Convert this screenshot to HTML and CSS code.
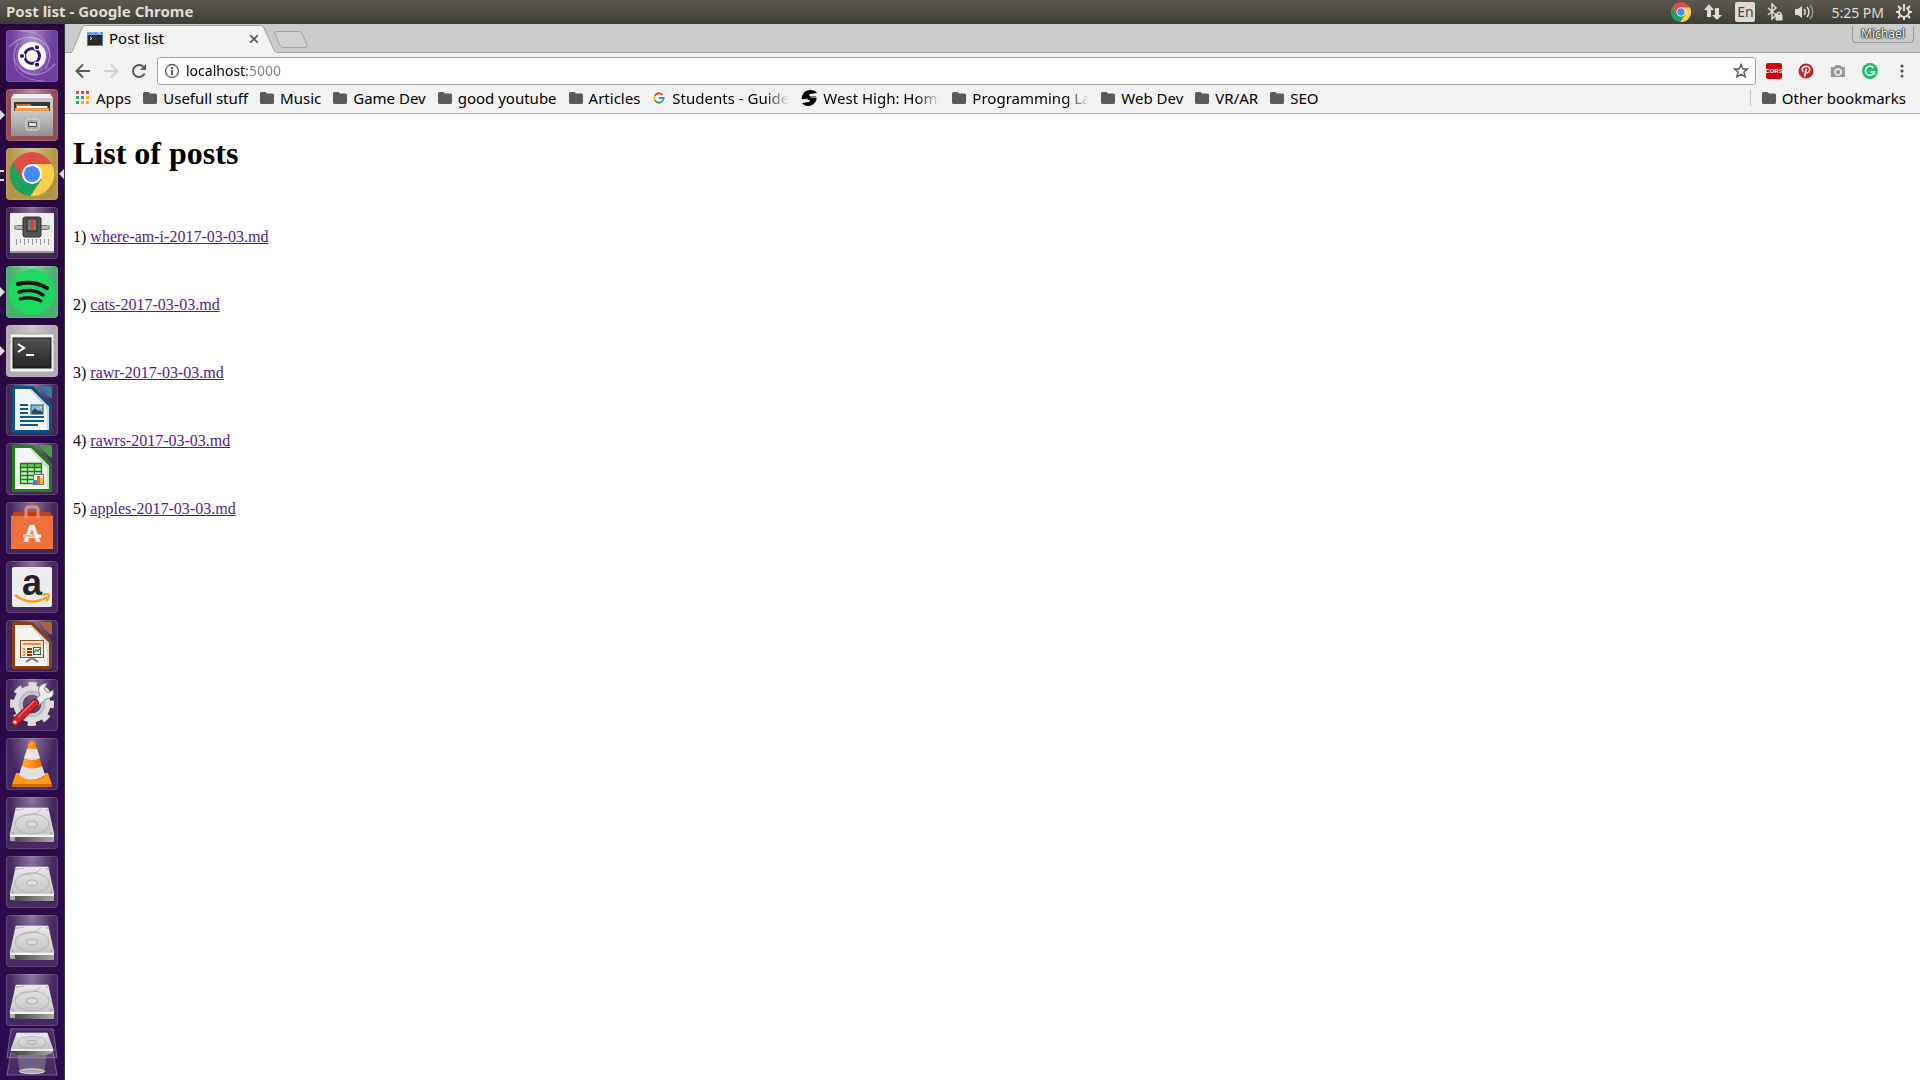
FILE: index.html
```html
<!DOCTYPE html>
<html lang="en">
<head>
  <meta charset="UTF-8" />
  <meta name="viewport" content="width=device-width, initial-scale=1.0" />
  <title>Post list</title>
  <link rel="stylesheet" href="styles.css">
</head>
<body>
  <svg class="defs" aria-hidden="true">
    <defs>
      <linearGradient id="metal" x1="0" y1="0" x2="0" y2="1"><stop offset="0" stop-color="#e9e9e9"/><stop offset="1" stop-color="#c4c4c4"/></linearGradient>
      <linearGradient id="edge" x1="0" y1="0" x2="1" y2="0"><stop offset="0" stop-color="#3c3c3c"/><stop offset="1" stop-color="#a8a8a8"/></linearGradient>
      <linearGradient id="drawer" x1="0" y1="0" x2="0" y2="1"><stop offset="0" stop-color="#c9c9c9"/><stop offset="1" stop-color="#929292"/></linearGradient>
      <linearGradient id="screen" x1="0" y1="0" x2="0" y2="1"><stop offset="0" stop-color="#555"/><stop offset="1" stop-color="#222"/></linearGradient>
      <linearGradient id="orange" x1="0" y1="0" x2="0" y2="1"><stop offset="0" stop-color="#e8703f"/><stop offset="1" stop-color="#f4743a"/></linearGradient>
      <linearGradient id="cone" x1="0" y1="0" x2="1" y2="0"><stop offset="0" stop-color="#ffa53a"/><stop offset=".5" stop-color="#ff9320"/><stop offset="1" stop-color="#d95b00"/></linearGradient>
    </defs>
    <symbol id="chrome" viewBox="0 0 44 44">
      <circle cx="22" cy="22" r="22" fill="#dd4f43"/>
      <path d="M22 22 12.500 27.500 3 11A22 22 0 0 0 20.500 44L31.500 27.500z" fill="#1ba261"/>
      <path d="M22 12H41.600A22 22 0 0 1 20.500 44L31.500 27.500z" fill="#ffcf4b"/>
      <circle cx="22" cy="22" r="10" fill="#fff"/>
      <circle cx="22" cy="22" r="8" fill="#4a8af4"/>
    </symbol>
    <symbol id="folder" viewBox="0 0 14 12">
      <path d="M1.500 0H5.500L7 1.500H12.500Q14 1.500 14 3V10.500Q14 12 12.500 12H1.500Q0 12 0 10.500V1.500Q0 0 1.500 0z" fill="#5a5a5a"/>
    </symbol>
    <symbol id="disk" viewBox="0 0 52 52">
      <path d="M10 11H42L48 38H4z" fill="url(#metal)" stroke="#efefef" stroke-width=".6"/>
      <path d="M4 39H48V44Q48 45 47 45H5Q4 45 4 44z" fill="url(#edge)"/>
      <path d="M4 38H48V40H4z" fill="#f5f5f5"/>
      <path d="M4 40H9V44H5Q4 44 4 43z" fill="#aaa"/>
      <ellipse cx="26" cy="27" rx="17" ry="10" fill="none" stroke="#b5b5b5"/>
      <path d="M10 24Q14 18 25 18 32 17 35 12M12 13 18 12" fill="none" stroke="#bbb"/>
      <ellipse cx="26" cy="27" rx="5.500" ry="3" fill="#ddd" stroke="#aaa"/>
      <g fill="#777"><circle cx="7" cy="36" r=".7"/><circle cx="45" cy="36" r=".7"/><circle cx="11" cy="13" r=".7"/><circle cx="41" cy="13" r=".7"/></g>
    </symbol>
    <symbol id="office" viewBox="0 0 52 52">
      <path d="M8 2H27L46 21V47Q46 49 44 49H8Q6 49 6 47V4Q6 2 8 2z" fill="currentColor"/>
      <path d="M9 5H25L43 23V46H9z" fill="#f4f4f4"/>
      <path d="M25 5 43 23V46H41V25L23 5z" fill="#d5d5d5"/>
      <path d="M33 2H44Q46 2 46 4V15Q39 11 33 2z" fill="currentColor"/>
      <path d="M33 2H44Q46 2 46 4V15Q39 11 33 2z" fill="#fff" opacity=".2"/>
    </symbol>
  </svg>

  <header class="panel">
    <span class="window-title">Post list - Google Chrome</span>
    <div class="indicators">
      <svg width="20" height="20"><use href="#chrome"/></svg>
      <svg width="20" height="20" viewBox="0 0 20 20" fill="#dfdbd2"><path d="M6 2 11 8H8V15H4V8H1zM14 18 9 13H12V6H16V13H19z"/></svg>
      <span class="lang">En</span>
      <svg width="16" height="20" viewBox="0 0 16 20" fill="none" stroke="#dfdbd2" stroke-width="1.500"><path d="M1 6 9 13 5 17V2L9 6 1 13"/><path d="M9 13H15V18H9z" fill="#dfdbd2" stroke="#dfdbd2" stroke-width="1"/><path d="M10 13V11.500Q12 9 14 11.500V13"/></svg>
      <svg width="24" height="20" viewBox="0 0 24 20" fill="none" stroke="#dfdbd2" stroke-width="1.500"><path d="M0 7H3L7 4V16L3 13H0z" fill="#dfdbd2" stroke="none"/><path d="M9 7Q11.500 10 9 13M12 5Q16 10 12 15"/><path d="M15 3Q20.500 10 15 17" stroke="#99968e"/></svg>
      <span class="clock">5:25 PM</span>
      <svg width="16" height="20" viewBox="0 0 16 20" fill="none" stroke="#dfdbd2"><path d="M5.500 5.600A5 5 0 1 0 10.500 5.600" stroke-width="2"/><path d="M8 2V9" stroke-width="2"/><path d="M4 6 2 4M12 6 14 4M3 10H0M13 10H16M4 14 2 16M12 14 14 16M8 15V18" stroke-width="2"/></svg>
    </div>
  </header>

  <div class="desktop">
    <nav class="launcher" aria-label="Launcher">
      <button class="tile dash" aria-label="Search">
        <svg viewBox="0 0 52 52"><g fill="none" stroke="#fff" stroke-opacity=".3"><path d="M3 17Q18 1 36 11 50 22 39 39" stroke-width="1.500"/><path d="M49 34Q34 51 17 41 2 30 12 13" stroke-width="1.500"/><path d="M14 1Q42 0 44 27M38 51Q8 50 8 28"/></g><path d="M13 13Q28 0 39 14 46 25 38 37L26 26z" fill="#fff" opacity=".15"/><path d="M39 39Q24 52 13 38 6 27 14 15L26 26z" fill="#fff" opacity=".15"/><circle cx="26" cy="26" r="14" fill="#fff"/><circle cx="26" cy="26" r="7.500" fill="none" stroke="#3d1768" stroke-width="3"/><g fill="#3d1768" stroke="#fff" stroke-width="1.200"><circle cx="16" cy="26" r="2.700"/><circle cx="31" cy="17.300" r="2.700"/><circle cx="31" cy="34.700" r="2.700"/></g></svg>
      </button>
      <button class="tile files running" aria-label="Files">
        <svg viewBox="0 0 52 52"><path d="M8 5H44L47 9V46H5V9z" fill="#c8c8c8"/><path d="M8 5H44L47 9H5z" fill="#f1f1f1"/><path d="M8 13H44V24H8z" fill="#373737"/><path d="M10 15H24L26 17H42V24H10z" fill="#dc682a"/><path d="M11 17H41V24H11z" fill="#fff"/><path d="M9 19H43V24H9z" fill="#f19b4d"/><path d="M5 22H47V47H5z" fill="url(#drawer)"/><rect x="20" y="30" width="13" height="11" rx="2" fill="#aaa" stroke="#e0e0e0"/><path d="M22.500 33.500H30.500V37.500H22.500z" fill="#ddd" stroke="#555"/></svg>
      </button>
      <button class="tile browser" aria-label="Google Chrome">
        <svg viewBox="0 0 52 52"><use href="#chrome" x="4" y="4" width="44" height="44"/></svg>
      </button>
      <button class="tile" aria-label="Tweak Tool">
        <svg viewBox="0 0 52 52"><rect x="4" y="6" width="44" height="40" rx="1" fill="#eee"/><path d="M4 44H48V46H4z" fill="#999"/><rect x="8.500" y="18.500" width="35" height="4" rx="2" fill="#bbb" stroke="#777"/><rect x="17" y="10" width="18" height="20" rx="2" fill="#555" stroke="#333"/><rect x="21" y="12" width="10" height="12" fill="#777" stroke="#292929"/><path d="M26 12V23" stroke="#f22" stroke-width="2"/><path d="M10.500 32V38M14.500 32V36M18.500 32V38M22.500 32V36M26.500 32V38M30.500 32V36M34.500 32V38M38.500 32V36M42.500 32V38" stroke="#999"/></svg>
      </button>
      <button class="tile spotify running" aria-label="Spotify">
        <svg viewBox="0 0 52 52"><circle cx="26" cy="26" r="23" fill="#1ed760"/><g fill="none" stroke="#191414" stroke-linecap="round"><path d="M12 18Q28 14 41 22" stroke-width="4"/><path d="M13 26Q27 22 37 29" stroke-width="3.500"/><path d="M14 33Q26 30 35 35" stroke-width="3"/></g></svg>
      </button>
      <button class="tile terminal running" aria-label="Terminal">
        <svg viewBox="0 0 52 52"><rect x="4" y="9" width="44" height="38" rx="1" fill="#f2f2f2" stroke="#aaa"/><rect x="7" y="13" width="38" height="30" fill="url(#screen)" stroke="#161616"/><path d="M12 19 18 23 12 27M20 30H28" fill="none" stroke="#fff" stroke-width="2"/></svg>
      </button>
      <button class="tile writer" aria-label="LibreOffice Writer">
        <svg viewBox="0 0 52 52"><use href="#office"/><path d="M14 21H22M14 25H22M14 29H22M14 33H38M14 37H38M14 41H32" stroke="#125a8c" stroke-width="2"/><rect x="25" y="21" width="12" height="9" fill="#79c0e8" stroke="#125a8c"/><path d="M26 30V27L29 24 32 27 34 26 37 29V30z" fill="#3c4a4a"/><circle cx="35" cy="23" r="1.500" fill="#f8c53a"/></svg>
      </button>
      <button class="tile calc" aria-label="LibreOffice Calc">
        <svg viewBox="0 0 52 52"><use href="#office"/><path d="M14 20H36V41H14z" fill="#c8f1bd"/><path d="M14 20H36V24H14z" fill="#73cc5e"/><path d="M14.500 20.500H35.500V40.500H14.500zM21.500 20V41M28.500 20V41M14 24.500H36M14 28.500H36M14 32.500H36M14 36.500H36" fill="none" stroke="#18790e" stroke-width="1.300"/><rect x="27.500" y="31.500" width="10" height="10" fill="#fff" stroke="#777"/><path d="M28 37H31V41H28z" fill="#298ac4"/><path d="M31 33H34V41H31z" fill="#e76b28"/><path d="M34 35H37V41H34z" fill="#f5b52d"/></svg>
      </button>
      <button class="tile" aria-label="Ubuntu Software">
        <svg viewBox="0 0 52 52"><path d="M8 10H44L47 15H5z" fill="#b9421b"/><path d="M5 14H47V47H5z" fill="url(#orange)"/><path d="M20 17V8Q20 5 23 5H29Q32 5 32 8V17" fill="none" stroke="#f08a66" stroke-width="3"/><text x="26" y="40" class="store-letter">A</text><path d="M17 34H35" stroke="#fff" stroke-width="3"/><path d="M18 34H29" stroke="#ee6b30"/></svg>
      </button>
      <button class="tile" aria-label="Amazon">
        <svg viewBox="0 0 52 52"><rect x="6" y="6" width="40" height="40" rx="2" fill="#ececec"/><text x="26" y="34" class="amazon-letter">a</text><path d="M9 34Q25 46 41 36" fill="none" stroke="#ff9a13" stroke-width="2.500"/><path d="M37 34Q41 32 43 34 43 38 40 40" fill="none" stroke="#ff9a13" stroke-width="2"/></svg>
      </button>
      <button class="tile impress" aria-label="LibreOffice Impress">
        <svg viewBox="0 0 52 52"><use href="#office"/><rect x="14.500" y="20.500" width="23" height="17" fill="#fbe8dc" stroke="#a34d16"/><path d="M17 24H35" stroke="#e7894e" stroke-width="2"/><path d="M17 29H19M17 32H19M17 35H19" stroke="#e7894e" stroke-width="2"/><path d="M21 29H26M21 32H26M21 35H26" stroke="#8c3b0d" stroke-width="2"/><rect x="27.500" y="27.500" width="7" height="7" fill="#fff" stroke="#555"/><path d="M28 33 30 30 32 31 35 28" fill="none" stroke="#2ca02c" stroke-width="1.500"/><path d="M20 42 26 38 32 42" fill="none" stroke="#777" stroke-width="2"/></svg>
      </button>
      <button class="tile" aria-label="System Settings">
        <svg viewBox="0 0 52 52"><circle cx="26" cy="25" r="19" fill="none" stroke="#ddd" stroke-width="6" stroke-dasharray="8 6.920" stroke-dashoffset="4"/><circle cx="26" cy="25" r="14" fill="none" stroke="#ddd" stroke-width="9"/><circle cx="26" cy="25" r="12" fill="none" stroke="#bdbdbd" stroke-width="3"/><path d="M28 23 34 16Q30 8 37 5L41 4 38 10 42 14 47 11Q49 19 40 20L32 27z" fill="#f0f0f0" stroke="#888"/><path d="M9 43 29 24" stroke="#8f1015" stroke-width="8" stroke-linecap="round"/><path d="M9 43 29 24" stroke="#d4252c" stroke-width="6" stroke-linecap="round"/><path d="M12 38 28 22" stroke="#ef7175" stroke-width="1.500"/><circle cx="9" cy="43" r="1.500" fill="#fff"/></svg>
      </button>
      <button class="tile" aria-label="VLC media player">
        <svg viewBox="0 0 52 52"><path d="M10 35H42L46 47H6z" fill="#ff9b1a"/><path d="M6 46H46V49H6z" fill="#d36a00"/><path d="M23 4Q26 2 29 4L39 38Q26 47 13 38z" fill="url(#cone)"/><path d="M21 11H31L34 20Q26 24 18 20z" fill="#e6e6e6"/><path d="M16 28Q26 33 36 28L39 37Q26 46 13 37z" fill="#e1e1e1"/></svg>
      </button>
      <button class="tile" aria-label="Disk 1"><svg viewBox="0 0 52 52"><use href="#disk"/></svg></button>
      <button class="tile" aria-label="Disk 2"><svg viewBox="0 0 52 52"><use href="#disk"/></svg></button>
      <button class="tile" aria-label="Disk 3"><svg viewBox="0 0 52 52"><use href="#disk"/></svg></button>
      <button class="tile" aria-label="Disk 4"><svg viewBox="0 0 52 52"><use href="#disk"/></svg></button>
      <button class="folded" aria-label="Disk 5 and Trash">
        <svg width="52" height="50" viewBox="0 0 54 50"><g fill="#fff" fill-opacity=".14" stroke="#fff" stroke-opacity=".3"><path d="M5 1H49L53 31H1z"/><path d="M5 26H49L53 49H1z"/></g><path d="M12 26H42L40 46H14z" fill="#aaa" fill-opacity=".4"/><ellipse cx="27" cy="45" rx="13" ry="2.500" fill="#aaa" stroke="#ddd"/><path d="M11 5H43L49 22H5z" fill="url(#metal)"/><path d="M5 22H49V25L42 28H12L5 25z" fill="url(#edge)"/><path d="M5 22H49V24H5z" fill="#eee"/><ellipse cx="27" cy="15" rx="15" ry="6" fill="none" stroke="#b5b5b5"/><ellipse cx="27" cy="15" rx="5" ry="2" fill="none" stroke="#aaa"/></svg>
      </button>
    </nav>

    <div class="browser-window">
      <div class="tab-strip">
        <div class="tab">
          <svg class="tab-shape" width="208" height="29" viewBox="0 0 208 29"><path d="M0 28.500H1Q2 28 3 26L12 4Q13 1.500 15 1.500H191Q193 1.500 194 4L204 26Q205 28.500 208 28.500V29H0z" fill="#f2f2f2"/><path d="M0 28.500H1Q2 28 3 26L12 4Q13 1.500 15 1.500H191Q193 1.500 194 4L204 26Q205 28.500 208 28.500" fill="none" stroke="#a0a0a0"/></svg>
          <svg class="favicon" width="16" height="14" viewBox="0 0 16 14"><path d="M0 0H16V14H0z" fill="#5f7da8"/><path d="M0 0H16V3H0z" fill="#6ea0e4"/><path d="M1 3H15V13H1z" fill="#292929"/><path d="M3 5 5 6.500 3 8" fill="none" stroke="#fff"/><path d="M11 1H13" stroke="#fff"/><path d="M14 1H15" stroke="#e33"/></svg>
          <span class="tab-title">Post list</span>
          <button class="tab-close" aria-label="Close tab"><svg width="8" height="8" viewBox="0 0 8 8"><path d="M0 0 8 8M8 0 0 8" stroke="#555" stroke-width="1.600"/></svg></button>
        </div>
        <button class="new-tab" aria-label="New tab"><svg width="34" height="18" viewBox="0 0 34 18"><path d="M2 .500H25Q27 .500 28 2.500L33 14Q34 16.500 31 16.500H9Q7 16.500 6 14.500L1 3Q0 .500 2 .500z" fill="#d2d2d2" stroke="#a5a5a5"/></svg></button>
        <button class="profile">Michael</button>
      </div>

      <div class="toolbar">
        <button class="tool" aria-label="Back"><svg width="16" height="16" viewBox="0 0 16 16"><path d="M15 8H2M8 1.500 1.500 8 8 14.500" fill="none" stroke="#5a5a5a" stroke-width="2"/></svg></button>
        <button class="tool" aria-label="Forward" disabled><svg width="16" height="16" viewBox="0 0 16 16"><path d="M1 8H14M8 1.500 14.500 8 8 14.500" fill="none" stroke="#d3d3d3" stroke-width="2"/></svg></button>
        <button class="tool" aria-label="Reload"><svg width="16" height="16" viewBox="0 0 16 16"><path d="M13.500 10.500A6 6 0 1 1 12.500 4" fill="none" stroke="#5a5a5a" stroke-width="2"/><path d="M15 1V7H9z" fill="#5a5a5a"/></svg></button>
        <div class="omnibox">
          <svg width="16" height="16" viewBox="0 0 16 16"><circle cx="8" cy="8" r="6.500" fill="none" stroke="#5a5a5a" stroke-width="1.300"/><path d="M8 7V12M8 4V6" stroke="#5a5a5a" stroke-width="2"/></svg>
          <input class="address" type="text" aria-label="Address" value="localhost:5000">
          <button class="star" aria-label="Bookmark this page"><svg width="16" height="16" viewBox="0 0 16 16"><path d="M8 1.500 9.900 6H14.500L10.900 9 12.200 14 8 11.200 3.800 14 5.100 9 1.500 6H6.100z" fill="none" stroke="#5a5a5a" stroke-width="1.400"/></svg></button>
        </div>
        <button class="extension" aria-label="CORS"><svg width="16" height="16" viewBox="0 0 16 16"><rect width="16" height="16" rx="2" fill="#ca0a0a"/><text x="8" y="10" class="cors-text">CORS</text></svg></button>
        <button class="extension" aria-label="Pinterest"><svg width="16" height="16" viewBox="0 0 16 16"><circle cx="8" cy="8" r="7.500" fill="#cb2027"/><path d="M5 9Q2.500 4 8 3.300 12.500 3.500 11.500 7.500 10 11 7.500 9M8.300 5.500 6.500 13.500" fill="none" stroke="#fff" stroke-width="1.600"/></svg></button>
        <button class="extension" aria-label="Screenshot"><svg width="16" height="16" viewBox="0 0 16 16"><path d="M1 4H4L6 2H10L12 4H15V14H1z" fill="#999"/><circle cx="8" cy="9" r="3" fill="#999" stroke="#f2f2f2" stroke-width="1.600"/></svg></button>
        <button class="extension" aria-label="Grammarly"><svg width="16" height="16" viewBox="0 0 16 16"><circle cx="8" cy="8" r="8" fill="#1bbe72"/><path d="M11.500 5A4.500 4.500 0 1 0 12.300 9M8.500 9H12.500V12" fill="none" stroke="#fff" stroke-width="1.500"/></svg></button>
        <button class="extension" aria-label="Menu"><svg width="16" height="16" viewBox="0 0 16 16" fill="#5a5a5a"><circle cx="8" cy="3" r="1.600"/><circle cx="8" cy="8" r="1.600"/><circle cx="8" cy="13" r="1.600"/></svg></button>
      </div>

      <div class="bookmarks">
        <a class="bookmark" href="#"><svg width="14" height="14" viewBox="0 0 14 14"><path d="M0 0H3V3H0zM5 0H8V3H5zM10 0H13V3H10z" fill="#ea4335"/><path d="M0 5H3V8H0zM0 10H3V13H0z" fill="#34a853"/><path d="M5 5H8V8H5z" fill="#4285f4"/><path d="M10 5H13V8H10zM5 10H8V13H5zM10 10H13V13H10z" fill="#fbb605"/></svg><span>Apps</span></a>
        <button class="bookmark"><svg width="14" height="12"><use href="#folder"/></svg><span>Usefull stuff</span></button>
        <button class="bookmark"><svg width="14" height="12"><use href="#folder"/></svg><span>Music</span></button>
        <button class="bookmark"><svg width="14" height="12"><use href="#folder"/></svg><span>Game Dev</span></button>
        <button class="bookmark"><svg width="14" height="12"><use href="#folder"/></svg><span>good youtube</span></button>
        <button class="bookmark"><svg width="14" height="12"><use href="#folder"/></svg><span>Articles</span></button>
        <a class="bookmark" href="#"><svg width="14" height="14" viewBox="0 0 14 14"><circle cx="7" cy="7" r="7" fill="#fff"/><g fill="none" stroke-width="2"><path d="M10.500 3.800A4.700 4.700 0 0 0 2.800 4.900" stroke="#ea4335"/><path d="M2.800 4.900A4.700 4.700 0 0 0 2.800 9.100" stroke="#fbbc05"/><path d="M2.800 9.100A4.700 4.700 0 0 0 10 10.500" stroke="#34a853"/><path d="M10 10.500Q11.700 9 11.700 7H7" stroke="#4285f4"/></g></svg><span class="long">Students - Guide</span></a>
        <a class="bookmark" href="#"><svg width="16" height="16" viewBox="0 0 16 16"><path d="M1 6Q3 0 9 0 14 0 16 3L9 4Q7 5 9 6H15Q16 9 15 11 12 16 7 16 3 16 1 13L8 12Q10 10 8 10H2Q0 9 1 6z" fill="#000"/><path d="M0 10 7 9M9 7H16" stroke="#f2f2f2"/></svg><span class="long">West High: Home</span></a>
        <button class="bookmark"><svg width="14" height="12"><use href="#folder"/></svg><span class="long">Programming La</span></button>
        <button class="bookmark"><svg width="14" height="12"><use href="#folder"/></svg><span>Web Dev</span></button>
        <button class="bookmark"><svg width="14" height="12"><use href="#folder"/></svg><span>VR/AR</span></button>
        <button class="bookmark"><svg width="14" height="12"><use href="#folder"/></svg><span>SEO</span></button>
        <button class="bookmark other"><svg width="14" height="12"><use href="#folder"/></svg><span>Other bookmarks</span></button>
      </div>

      <main class="page">
        <h1>List of posts</h1>
        <br>
        <p>1) <a href="#">where-am-i-2017-03-03.md</a></p>
        <br>
        <p>2) <a href="#">cats-2017-03-03.md</a></p>
        <br>
        <p>3) <a href="#">rawr-2017-03-03.md</a></p>
        <br>
        <p>4) <a href="#">rawrs-2017-03-03.md</a></p>
        <br>
        <p>5) <a href="#">apples-2017-03-03.md</a></p>
      </main>
    </div>
  </div>
</body>
</html>
```
FILE: styles.css
```css
* {
  box-sizing: border-box;
}
body {
  margin: 0;
  height: 100vh;
  display: flex;
  flex-direction: column;
  overflow: hidden;
  font-family: "Noto Sans", sans-serif;
  font-size: 14px;
  color: #000;
  background: #fff;
}
button {
  padding: 0;
  border: none;
  background: none;
  font: inherit;
  color: inherit;
}
svg {
  flex: none;
  display: block;
}
.defs {
  position: absolute;
  width: 0;
  height: 0;
}

/* top panel */
.panel {
  flex: none;
  height: 24px;
  padding: 0 8px 0 6px;
  display: flex;
  align-items: center;
  justify-content: space-between;
  background: linear-gradient(#5b594f, #3e3d38);
  color: #dfdbd2;
}
.window-title {
  font-size: 15px;
  font-weight: bold;
  line-height: 18px;
  padding-bottom: 2px;
}
.indicators {
  display: flex;
  align-items: center;
  gap: 12px;
}
.lang {
  width: 20px;
  height: 20px;
  border-radius: 2px;
  background: #dfdbd2;
  color: #45443e;
  font-size: 14px;
  line-height: 20px;
  text-align: center;
}

/* launcher */
.desktop {
  flex: 1;
  min-height: 0;
  display: flex;
}
.launcher {
  flex: none;
  width: 65px;
  padding: 6px 0 0 6px;
  display: flex;
  flex-direction: column;
  gap: 7px;
  background: linear-gradient(#29063f, #2b0946 50%, #2d0b50);
  border-right: 1px solid #3a3340;
}
.tile {
  position: relative;
  flex: none;
  width: 52px;
  height: 52px;
  border-radius: 4px;
  background: radial-gradient(ellipse at 50% 0, rgba(255, 255, 255, 0.45), rgba(255, 255, 255, 0.12) 60%);
  box-shadow: inset 0 0 0 1px rgba(255, 255, 255, 0.12);
}
.dash {
  background-color: #5b2393;
}
.files {
  background-color: #843440;
}
.browser {
  background-color: #a5872c;
}
.spotify {
  background-color: #30a45b;
}
.terminal {
  background-color: #a39fa8;
}
.writer {
  color: #0b5485;
}
.calc {
  color: #1c8210;
}
.impress {
  color: #8c400f;
}
.running::before {
  content: "";
  position: absolute;
  left: -6px;
  top: 21px;
  border: 5px solid transparent;
  border-left-color: #ddd;
  border-right: none;
}
.browser::before {
  content: "";
  position: absolute;
  left: -6px;
  top: 22px;
  width: 4px;
  height: 7px;
  border-top: 2px solid #ddd;
  border-bottom: 2px solid #ddd;
}
.browser::after {
  content: "";
  position: absolute;
  right: -6px;
  top: 21px;
  border: 5px solid transparent;
  border-right-color: #ddd;
  border-left: none;
}
.folded {
  flex: none;
  width: 52px;
  margin-top: -6px;
}
.store-letter {
  font: bold 24px "Noto Sans", sans-serif;
  fill: #fff;
  text-anchor: middle;
}
.amazon-letter {
  font: bold 36px "Liberation Sans", sans-serif;
  fill: #222;
  text-anchor: middle;
}

/* browser */
.browser-window {
  flex: 1;
  min-width: 0;
  display: flex;
  flex-direction: column;
}
.tab-strip {
  flex: none;
  height: 29px;
  padding: 0 6px 0 5px;
  display: flex;
  align-items: flex-start;
  background: #ccc;
  border-bottom: 1px solid #a0a0a0;
}
.tab {
  position: relative;
  width: 208px;
  height: 29px;
  padding: 0 20px 0 17px;
  display: flex;
  align-items: center;
  gap: 6px;
}
.tab-shape {
  position: absolute;
  left: 0;
  top: 0;
}
.favicon,
.tab-title,
.tab-close {
  position: relative;
}
.tab-title {
  flex: 1;
  font-size: 15px;
  line-height: 18px;
  padding-bottom: 2px;
}
.new-tab {
  margin-top: 7px;
  margin-left: -4px;
}
.profile {
  width: 62px;
  height: 17px;
  margin: 2px 0 0 auto;
  border: 1px solid #999;
  border-top: none;
  border-radius: 0 0 4px 4px;
  color: #fff;
  font-size: 12px;
  line-height: 16px;
  text-shadow: 0 0 1px #000, 0 0 2px #000, 0 0 2px #000;
}
.toolbar {
  flex: none;
  height: 35px;
  padding: 0 2px 0 4px;
  display: flex;
  align-items: center;
  background: #f2f2f2;
}
.tool {
  width: 28px;
  display: flex;
  justify-content: center;
}
.extension {
  width: 32px;
  display: flex;
  justify-content: center;
}
.omnibox {
  flex: 1;
  height: 28px;
  margin: 0 2px 0 4px;
  padding: 0 6px;
  display: flex;
  align-items: center;
  gap: 6px;
  border: 1px solid #a9a9a9;
  border-radius: 3px;
  background: #fff;
}
.address {
  flex: 1;
  min-width: 0;
  padding: 0;
  border: none;
  outline: none;
  font: inherit;
  color: transparent;
  background: linear-gradient(to right, #000 61px, #808080 61px);
  -webkit-background-clip: text;
  background-clip: text;
}
.cors-text {
  font: bold 6px "Liberation Sans", sans-serif;
  fill: #fff;
  text-anchor: middle;
}
.bookmarks {
  flex: none;
  height: 26px;
  padding: 0 14px 6px 11px;
  display: flex;
  align-items: center;
  gap: 12px;
  background: #f2f2f2;
  border-bottom: 1px solid #b5b5b5;
}
.bookmark {
  display: flex;
  align-items: center;
  gap: 6px;
  color: #000;
  font-size: 15px;
  line-height: 20px;
  text-decoration: none;
  white-space: nowrap;
}
.long {
  width: 117px;
  text-align: left;
  -webkit-mask-image: linear-gradient(to right, #000 80%, transparent);
  mask-image: linear-gradient(to right, #000 80%, transparent);
}
.other {
  margin-left: auto;
  padding-left: 11px;
  border-left: 1px solid #c4c4c4;
  line-height: 16px;
}

/* page */
.page {
  flex: 1;
  padding: 0 8px;
  font-family: "Liberation Serif", serif;
  font-size: 16px;
}
.page h1 {
  margin: 21px 0 22px;
  font-size: 32px;
}
.page p {
  margin: 16px 0;
}
.page a {
  color: #551a8b;
}
```
